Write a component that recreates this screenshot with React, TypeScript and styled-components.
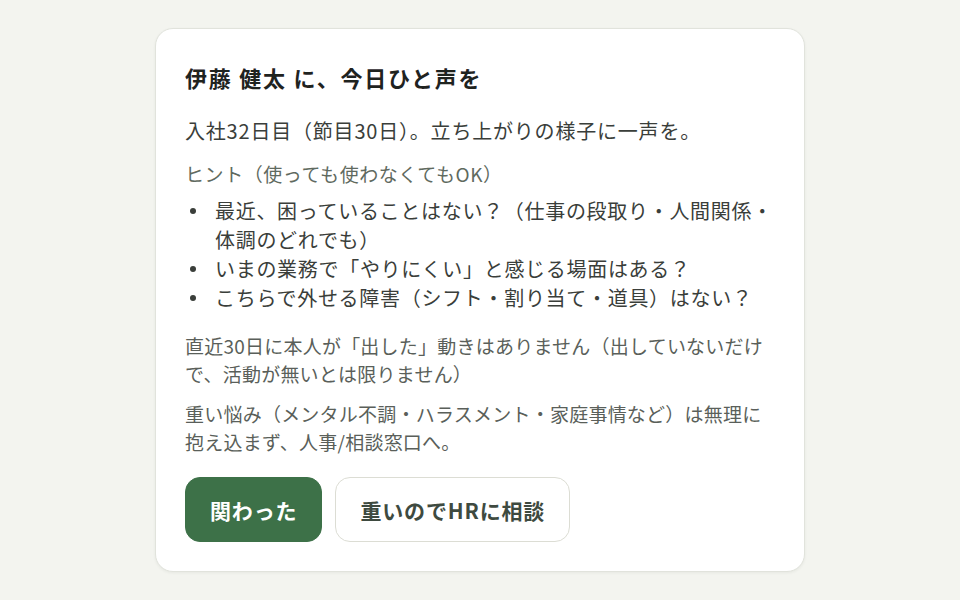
import React from 'react'
import styled, { createGlobalStyle } from 'styled-components'

const GlobalStyle = createGlobalStyle`
  html, body {
    margin: 0;
    padding: 0;
    background: #f3f4ef;
  }
  body {
    font-family: "Noto Sans CJK JP", "Noto Sans", sans-serif;
  }
`

const hints = [
  '最近、困っていることはない？（仕事の段取り・人間関係・体調のどれでも）',
  'いまの業務で「やりにくい」と感じる場面はある？',
  'こちらで外せる障害（シフト・割り当て・道具）はない？',
]

const App = () => {
  return (
    <Page>
      <GlobalStyle />
      <Card>
        <Title>伊藤 健太 に、今日ひと声を</Title>
        <Lead>入社32日目（節目30日）。立ち上がりの様子に一声を。</Lead>
        <HintLabel>ヒント（使っても使わなくてもOK）</HintLabel>
        <HintList>
          {hints.map((h) => (
            <HintItem key={h}>
              <Dot />
              <span>{h}</span>
            </HintItem>
          ))}
        </HintList>
        <Note>直近30日に本人が「出した」動きはありません（出していないだけで、活動が無いとは限りません）</Note>
        <Note>重い悩み（メンタル不調・ハラスメント・家庭事情など）は無理に抱え込まず、人事/相談窓口へ。</Note>
        <Actions>
          <Button primary>関わった</Button>
          <Button>重いのでHRに相談</Button>
        </Actions>
      </Card>
    </Page>
  )
}

export default App

const Page = styled.div`
  width: 960px;
  height: 600px;
  display: flex;
  justify-content: center;
  padding-top: 28px;
  box-sizing: border-box;
`
const Card = styled.div`
  width: 650px;
  height: 544px;
  box-sizing: border-box;
  background: #ffffff;
  border: 1px solid #e1e3dc;
  border-radius: 18px;
  box-shadow: 0 1px 3px rgba(40, 50, 40, 0.06);
  padding: 32px 29px 29px;
  display: flex;
  flex-direction: column;
`
const Title = styled.h2`
  margin: 0;
  font-size: 22px;
  line-height: 32px;
  font-weight: 700;
  letter-spacing: 0.08em;
  color: #1f231f;
`
const Lead = styled.p`
  margin: 23px 0 0;
  font-size: 20px;
  line-height: 30px;
  letter-spacing: 0.04em;
  color: #3a3e3a;
`
const HintLabel = styled.div`
  margin-top: 14px;
  font-size: 19px;
  line-height: 28px;
  letter-spacing: 0.03em;
  color: #5f6a60;
`
const HintList = styled.ul`
  margin: 8px 0 0;
  padding: 0;
  list-style: none;
  font-size: 20px;
  line-height: 29px;
  letter-spacing: 0.035em;
  color: #3a3e3a;
`
const HintItem = styled.li`
  display: flex;
  align-items: flex-start;
`
const Dot = styled.span`
  flex: none;
  width: 6px;
  height: 6px;
  margin: 12px 19px 0 5px;
  border-radius: 50%;
  background: #3a3e3a;
`
const Note = styled.p`
  margin: 20px 0 0;
  font-size: 19px;
  line-height: 28px;
  letter-spacing: 0.012em;
  color: #5a5f5a;
  & + & {
    margin-top: 12px;
  }
`
const Actions = styled.div`
  margin-top: 21px;
  display: flex;
  gap: 13px;
`
const Button = styled.button<{ primary?: boolean }>`
  height: 65px;
  padding: 0 24px;
  border-radius: 15px;
  font-family: inherit;
  font-size: 21px;
  font-weight: 700;
  letter-spacing: 0.04em;
  cursor: pointer;
  border: 1px solid ${(p) => (p.primary ? '#3d7148' : '#dcddd4')};
  background: ${(p) => (p.primary ? '#3d7148' : '#ffffff')};
  color: ${(p) => (p.primary ? '#ffffff' : '#3e4a40')};
`
